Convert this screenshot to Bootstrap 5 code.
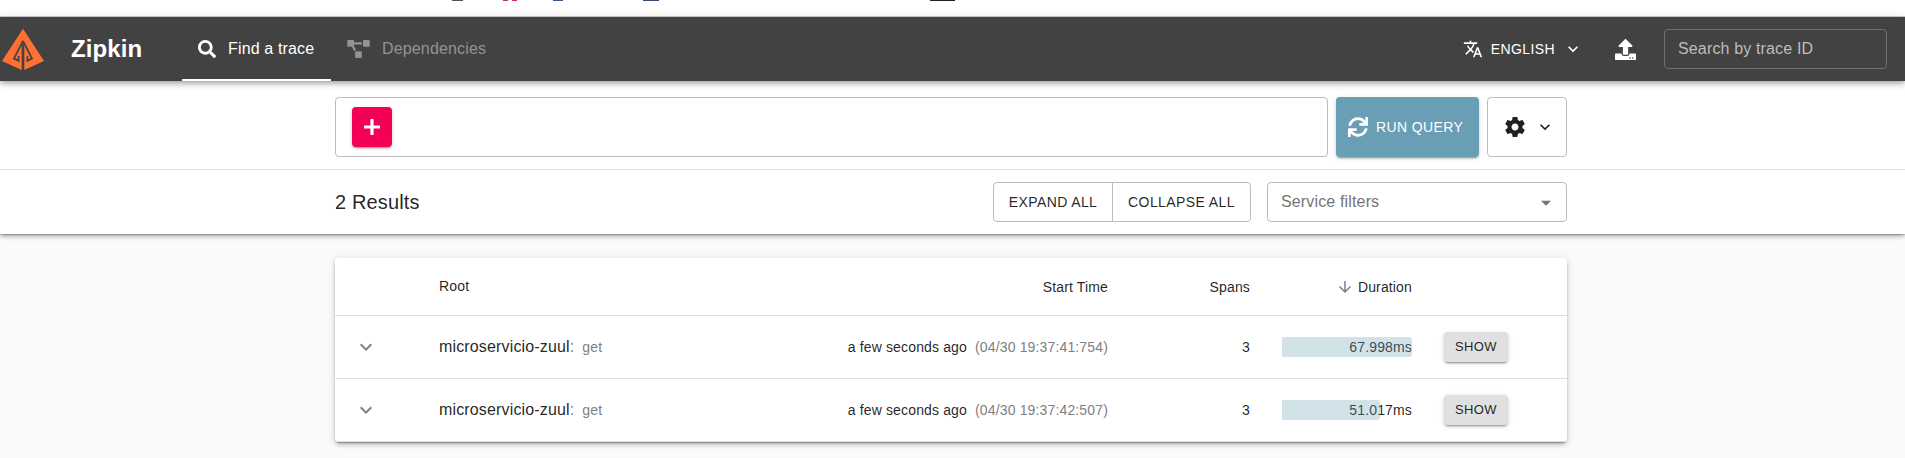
<!DOCTYPE html>
<html lang="en">
<head>
<meta charset="utf-8">
<title>Zipkin</title>
<link href="https://cdn.jsdelivr.net/npm/bootstrap@5.3.0/dist/css/bootstrap.min.css" rel="stylesheet">
<style>
body{font-family:"Liberation Sans",Arial,sans-serif;font-size:14px;letter-spacing:.15px;line-height:20px;color:rgba(0,0,0,.87);background:#fafafa;min-height:100vh}
svg{display:block;flex:none;fill:currentColor}
.browser-strip{height:17px;background:#fff;border-bottom:1px solid #ccc}
.app-bar{height:64px;background:#424242;color:#fff;box-shadow:0 2px 4px -1px rgba(0,0,0,.2),0 4px 5px rgba(0,0,0,.14),0 1px 10px rgba(0,0,0,.12);z-index:2}
.brand-logo{margin-left:1px}
.brand-name{font-size:24px;font-weight:700;line-height:32px;letter-spacing:.1px;margin-left:26px;width:111px}
.tab-link{height:64px;font-size:16px;color:#939393;padding:2px 16px 0;border-bottom:2px solid transparent}
.tab-link.active{width:149px;color:#fff;border-color:#fff}
.tab-link:hover{color:#fff}
.upper{font-size:14px;letter-spacing:.4px;text-transform:uppercase}
.trace-input{width:223px;height:40px;border:1px solid #6f6f6f;border-radius:4px;font-size:16px;color:#bdbdbd;padding:0 13px}
.page-width{width:1232px;margin-left:335px}
.outlined{border:1px solid #bdbdbd;border-radius:4px;background:#fff}
.query-area{background:#fff;height:89px;border-bottom:1px solid #e0e0e0;padding-top:16px}
.query-row{height:60px}
.add-btn{width:40px;height:40px;background:#f50057;color:#fff;border-radius:4px;margin-left:16px;box-shadow:0 3px 1px -2px rgba(0,0,0,.2),0 2px 2px rgba(0,0,0,.14),0 1px 5px rgba(0,0,0,.12)}
.run-btn{width:143px;background:#6a9eb5;color:#fff;border-radius:4px;padding-left:12px;box-shadow:0 3px 1px -2px rgba(0,0,0,.2),0 2px 2px rgba(0,0,0,.14),0 1px 5px rgba(0,0,0,.12)}
.result-bar{background:#fff;height:64px;clip-path:inset(0 0 -14px 0);box-shadow:0 1px 1px rgba(0,0,0,.15),0 3px 3px -2px rgba(0,0,0,.2),0 3px 4px rgba(0,0,0,.14),0 1px 8px rgba(0,0,0,.12)}
.result-count{font-size:20px}
.split-btns{height:40px;width:258px}
.filter-select{width:300px;height:40px;font-size:16px;color:#757575;padding:0 10px 0 13px}
.trace-card{margin-top:24px;background:#fff;border-radius:4px;box-shadow:0 1px 1px rgba(0,0,0,.2),0 3px 3px -2px rgba(0,0,0,.2),0 3px 4px rgba(0,0,0,.14),0 1px 8px rgba(0,0,0,.12)}
.trace-grid{table-layout:fixed;border-collapse:separate;border-spacing:0}
.trace-grid th,.trace-grid td{padding:0 16px;height:63px;font-weight:400;border-bottom:1px solid #e0e0e0;vertical-align:middle}
.trace-grid th{height:58px}
.service{font-size:16px;letter-spacing:.15px}
.muted{color:#808080}
.duration{height:20px;width:130px;margin-left:auto}
.duration-bar{height:20px;background:rgba(106,158,181,.3);border-radius:0 3px 3px 0;inset:0 auto 0 0}
.show-btn{width:64px;height:30px;line-height:29.500px;font-size:13px;background:#e0e0e0;border-radius:4px;text-align:center;letter-spacing:.37px;box-shadow:0 3px 1px -2px rgba(0,0,0,.2),0 2px 2px rgba(0,0,0,.14),0 1px 5px rgba(0,0,0,.12)}
</style>
</head>
<body>
<svg width="0" height="0" class="position-absolute"><defs>
<symbol id="chev" viewBox="0 0 24 24"><path d="M16.59 8.59L12 13.17 7.41 8.59 6 10l6 6 6-6z"/></symbol>
</defs></svg>
<div class="browser-strip"><svg width="1000" height="1"><path fill="#555" d="M452 0h11v1h-11z"/><path fill="#c4384a" d="M457 0m46 0h5v1h-5zM512 0h5v1h-5z"/><path fill="#385a85" d="M494 0m59 0h10v1h-10z"/><path fill="#3b4a78" d="M643 0h16v1h-16z"/><path fill="#222" d="M929 0h25v1h-25z" transform="translate(1)"/></svg></div>
<header class="app-bar d-flex align-items-center position-relative">
  <svg class="brand-logo" width="44" height="42" viewBox="1 28 44 42"><path fill="#ff7033" d="M23 28.700 44 61 24.300 70V45.500L23 43l-1.300 2.500V70L2 61z"/><path fill="none" stroke="#424242" stroke-width="1.700" d="M23 41 14 58.600l4.600 2.200V56M23 41l9 17.600-4.600 2.200V56"/></svg>
  <div class="brand-name">Zipkin</div>
  <nav class="d-flex">
    <a href="#" class="tab-link active d-flex align-items-center text-decoration-none"><svg width="18" height="18" viewBox="0 0 512 512"><path d="M505 442.700L405.300 343c-4.500-4.500-10.600-7-17-7H372c27.600-35.300 44-79.700 44-128C416 93.100 322.900 0 208 0S0 93.100 0 208s93.100 208 208 208c48.300 0 92.700-16.400 128-44v16.300c0 6.400 2.500 12.500 7 17l99.700 99.700c9.400 9.400 24.600 9.400 33.900 0l28.300-28.300c9.400-9.400 9.400-24.600.1-34zM208 336c-70.700 0-128-57.200-128-128 0-70.700 57.200-128 128-128 70.700 0 128 57.200 128 128 0 70.700-57.200 128-128 128z"/></svg><span style="margin-left:12px">Find a trace</span></a>
    <a href="#" class="tab-link d-flex align-items-center text-decoration-none"><svg width="23" height="18" viewBox="0 0 640 512"><path d="M384 320H256c-17.700 0-32 14.300-32 32v128c0 17.700 14.300 32 32 32h128c17.700 0 32-14.300 32-32V352c0-17.700-14.300-32-32-32zM192 32c0-17.700-14.300-32-32-32H32C14.300 0 0 14.300 0 32v128c0 17.700 14.300 32 32 32h95.700l73.200 128C212 301 232.400 288 256 288h.3L192 175.500V128h224V64H192V32zM608 0H480c-17.700 0-32 14.300-32 32v128c0 17.700 14.300 32 32 32h128c17.700 0 32-14.300 32-32V32c0-17.700-14.300-32-32-32z"/></svg><span style="margin-left:12px">Dependencies</span></a>
  </nav>
  <div class="d-flex align-items-center ms-auto" style="margin-right:18px">
    <svg width="20" height="20" viewBox="0 0 24 24"><path d="M12.870 15.070l-2.540-2.510.03-.03c1.740-1.940 2.980-4.170 3.710-6.530H17V4h-7V2H8v2H1v1.990h11.170C11.500 7.920 10.440 9.750 9 11.350 8.070 10.320 7.300 9.190 6.690 8h-2c.73 1.630 1.730 3.170 2.980 4.560l-5.090 5.020L4 19l5-5 3.110 3.110.76-2.040zM18.500 10h-2L12 22h2l1.120-3h4.750L21 22h2l-4.500-12zm-2.620 7l1.620-4.330L19.120 17h-3.240z"/></svg>
    <span class="upper" style="margin-left:8px">English</span>
    <svg width="20" height="20" style="margin-left:8px"><use href="#chev"/></svg>
    <svg width="21" height="21" viewBox="0 0 512 512" style="margin:0 28px 0 32px"><path d="M296 384h-80c-13.300 0-24-10.700-24-24V192h-87.700c-17.800 0-26.700-21.500-14.100-34.100L242.300 5.700c7.500-7.500 19.800-7.500 27.300 0l152.200 152.200c12.600 12.600 3.700 34.100-14.100 34.100H320v168c0 13.300-10.700 24-24 24zm216-8v112c0 13.300-10.700 24-24 24H24c-13.300 0-24-10.700-24-24V376c0-13.300 10.700-24 24-24h136v8c0 30.900 25.100 56 56 56h80c30.900 0 56-25.100 56-56v-8h136c13.300 0 24 10.700 24 24zm-124 88c0-11-9-20-20-20s-20 9-20 20 9 20 20 20 20-9 20-20zm64 0c0-11-9-20-20-20s-20 9-20 20 9 20 20 20 20-9 20-20z"/></svg>
    <div class="trace-input d-flex align-items-center">Search by trace ID</div>
  </div>
</header>
<section class="query-area">
  <div class="page-width query-row d-flex gap-2">
    <div class="outlined flex-grow-1 d-flex align-items-center"><div class="add-btn d-flex align-items-center justify-content-center"><svg width="16" height="16" viewBox="0 0 16 16"><path d="M7 0h2q.6 0 .6.600V6.400h5.800q.6 0 .6.600v2q0 .6-.6.600H9.600v5.800q0 .6-.6.600H7q-.6 0-.6-.6V9.600H.6Q0 9.600 0 9V7q0-.6.600-.6h5.800V.6Q6.400 0 7 0z"/></svg></div></div>
    <div class="run-btn d-flex align-items-center"><svg width="20" height="20" viewBox="0 0 512 512"><path d="M440.650 12.570l4 82.770A247.160 247.160 0 0 0 255.830 8C134.730 8 33.910 94.920 12.290 209.820A12 12 0 0 0 24.090 224h49.050a12 12 0 0 0 11.670-9.260 175.910 175.910 0 0 1 317-56.940l-101.460-4.860a12 12 0 0 0-12.570 12v47.410a12 12 0 0 0 12 12H500a12 12 0 0 0 12-12V12a12 12 0 0 0-12-12h-47.370a12 12 0 0 0-11.980 12.570zM255.830 432a175.610 175.610 0 0 1-146-77.800l101.800 4.870a12 12 0 0 0 12.570-12v-47.400a12 12 0 0 0-12-12H12a12 12 0 0 0-12 12V500a12 12 0 0 0 12 12h47.350a12 12 0 0 0 12-12.600l-4.150-82.570A247.170 247.170 0 0 0 255.830 504c121.110 0 221.930-86.920 243.550-201.820a12 12 0 0 0-11.800-14.180h-49.050a12 12 0 0 0-11.670 9.260A175.860 175.860 0 0 1 255.830 432z"/></svg><span class="upper ms-2">Run query</span></div>
    <div class="outlined d-flex align-items-center" style="width:80px;padding-left:15px"><svg width="24" height="24" viewBox="0 0 24 24"><path d="M19.430 12.980c.04-.32.07-.64.07-.98s-.03-.66-.07-.98l2.110-1.650c.19-.15.24-.42.12-.64l-2-3.460c-.12-.22-.39-.3-.61-.22l-2.490 1c-.52-.4-1.080-.73-1.690-.98l-.38-2.650C14.460 2.180 14.250 2 14 2h-4c-.25 0-.46.18-.49.42l-.38 2.650c-.61.25-1.170.59-1.690.98l-2.490-1c-.23-.09-.49 0-.61.22l-2 3.460c-.13.22-.07.49.12.64l2.110 1.650c-.04.32-.07.65-.07.98s.03.66.07.98l-2.110 1.650c-.19.15-.24.42-.12.64l2 3.460c.12.22.39.3.61.22l2.490-1c.52.4 1.080.73 1.690.98l.38 2.650c.03.24.24.42.49.42h4c.25 0 .46-.18.49-.42l.38-2.650c.61-.25 1.170-.59 1.690-.98l2.490 1c.23.09.49 0 .61-.22l2-3.460c.12-.22.07-.49-.12-.64l-2.110-1.650zM12 15.500c-1.930 0-3.500-1.570-3.500-3.500s1.570-3.500 3.500-3.500 3.500 1.570 3.500 3.500-1.570 3.500-3.500 3.500z"/></svg><svg width="20" height="20" style="margin-left:8px"><use href="#chev"/></svg></div>
  </div>
</section>
<section class="result-bar d-flex align-items-center">
  <div class="page-width d-flex align-items-center">
    <div class="result-count me-auto">2 Results</div>
    <div class="outlined split-btns upper d-flex text-center me-3"><span class="border-end d-flex align-items-center justify-content-center" style="width:119px;border-color:#bdbdbd!important">Expand all</span><span class="d-flex align-items-center justify-content-center flex-grow-1">Collapse all</span></div>
    <div class="outlined filter-select d-flex align-items-center justify-content-between"><span>Service filters</span><svg width="20" height="20" viewBox="0 0 24 24" class="mt-1"><path d="M6 8l6 6 6-6z"/></svg></div>
  </div>
</section>
<main class="page-width trace-card">
  <table class="trace-grid w-100">
    <colgroup><col style="width:88px"><col style="width:300px"><col style="width:401px"><col style="width:142px"><col style="width:162px"><col style="width:139px"></colgroup>
    <thead><tr><th></th><th><div style="margin-top:-2px">Root</div></th><th class="text-end">Start Time</th><th class="text-end">Spans</th><th><div class="d-flex align-items-center justify-content-end gap-1"><svg width="18" height="18" viewBox="0 0 24 24" class="muted"><path d="M20 12l-1.410-1.410L13 16.170V4h-2v12.170l-5.580-5.590L4 12l8 8 8-8z"/></svg>Duration</div></th><th></th></tr></thead>
    <tbody>
      <tr><td><svg width="24" height="24" class="muted" style="margin-left:3px"><use href="#chev"/></svg></td><td><span class="service">microservicio-zuul<span class="muted">:</span></span><span class="muted ms-2">get</span></td><td class="text-end">a few seconds ago<span class="muted ms-2">(04/30 19:37:41:754)</span></td><td class="text-end">3</td><td><div class="duration position-relative text-end">67.998ms<div class="duration-bar position-absolute" style="width:100%"></div></div></td><td><div class="show-btn">SHOW</div></td></tr>
      <tr><td><svg width="24" height="24" class="muted" style="margin-left:3px"><use href="#chev"/></svg></td><td><span class="service">microservicio-zuul<span class="muted">:</span></span><span class="muted ms-2">get</span></td><td class="text-end">a few seconds ago<span class="muted ms-2">(04/30 19:37:42:507)</span></td><td class="text-end">3</td><td><div class="duration position-relative text-end">51.017ms<div class="duration-bar position-absolute" style="width:75.03%"></div></div></td><td><div class="show-btn">SHOW</div></td></tr>
    </tbody>
  </table>
</main>
<script src="https://cdn.jsdelivr.net/npm/bootstrap@5.3.0/dist/js/bootstrap.bundle.min.js"></script>
</body>
</html>
